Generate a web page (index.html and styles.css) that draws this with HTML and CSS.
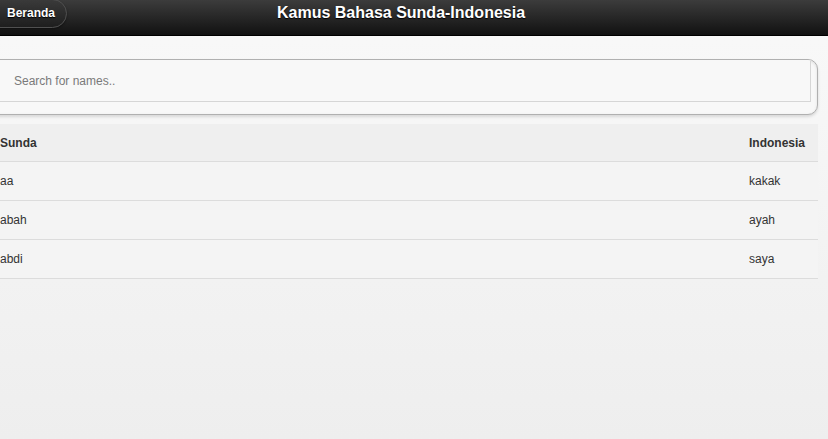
FILE: index.html
```html
<!DOCTYPE html>
<html lang="id">
<head>
<meta charset="utf-8">
<title>Kamus Bahasa Sunda-Indonesia</title>
<link rel="stylesheet" href="styles.css">
</head>
<body>
<header class="bar">
  <a class="btn" href="#">Beranda</a>
  <h1 class="title">Kamus Bahasa Sunda-Indonesia</h1>
</header>
<main class="content">
  <div class="search">
    <input class="search-input" type="text" placeholder="Search for names..">
  </div>
  <table class="dict">
    <thead>
      <tr><th>Sunda</th><th class="col-id">Indonesia</th></tr>
    </thead>
    <tbody>
      <tr><td>aa</td><td class="col-id">kakak</td></tr>
      <tr><td>abah</td><td class="col-id">ayah</td></tr>
      <tr><td>abdi</td><td class="col-id">saya</td></tr>
    </tbody>
  </table>
</main>
</body>
</html>
```
FILE: styles.css
```css
html, body {
  margin: 0;
  height: 100%;
}
body {
  font-family: "Liberation Sans", Arial, sans-serif;
  font-size: 12px;
  color: #333;
  background: linear-gradient(#f9f9f9, #eeeeee);
  overflow: hidden;
}
.bar {
  display: flex;
  align-items: flex-start;
  height: 35px;
  border-bottom: 1px solid #000;
  background: linear-gradient(#3c3c3c, #111111);
}
.btn {
  display: block;
  margin: -1px 0 0 -22px;
  height: 27px;
  padding: 0 11px 0 28px;
  line-height: 27px;
  border: 1px solid #505050;
  border-radius: 15px;
  background: linear-gradient(#3a3a3a, #1e1e1e);
  box-shadow: 0 1px 2px rgba(0,0,0,0.4);
  color: #fff;
  font-weight: bold;
  font-size: 12px;
  text-decoration: none;
  text-shadow: 0 1px 1px #000;
}
.title {
  flex: 1;
  margin: 0 93px 0 0;
  text-align: center;
  font-size: 16px;
  line-height: 26px;
  font-weight: bold;
  color: #fff;
  text-shadow: 0 1px 1px #000;
}
.content {
  margin: 23px 10px 0 -16px;
}
.search {
  height: 54px;
  border: 1px solid #b0b0b0;
  border-radius: 10px;
  background: #f8f8f8;
  box-shadow: 0 2px 3px rgba(0,0,0,0.12), inset 0 1px 3px rgba(0,0,0,0.1);
  overflow: hidden;
}
.search-input {
  display: block;
  box-sizing: border-box;
  width: calc(100% - 6px);
  height: 42px;
  margin: 0;
  padding: 0 0 0 29px;
  border: 1px solid #d6d6d6;
  border-top: none;
  border-left: none;
  background: #f8f8f8;
  font-family: "Liberation Sans", Arial, sans-serif;
  font-size: 12px;
  color: #333;
  outline: none;
}
.search-input::placeholder {
  color: #7a7a7a;
}
.dict {
  width: 100%;
  margin-top: 9px;
  border-collapse: collapse;
}
.dict th, .dict td {
  text-align: left;
  padding: 0 13px 0 16px;
  height: 38px;
  border-bottom: 1px solid #dcdcdc;
  font-size: 12px;
  color: #333;
}
.dict th {
  font-weight: bold;
  background: #efefef;
  height: 37px;
}
.dict td {
  background: #f4f4f4;
}
.dict .col-id {
  width: 56px;
}
```
